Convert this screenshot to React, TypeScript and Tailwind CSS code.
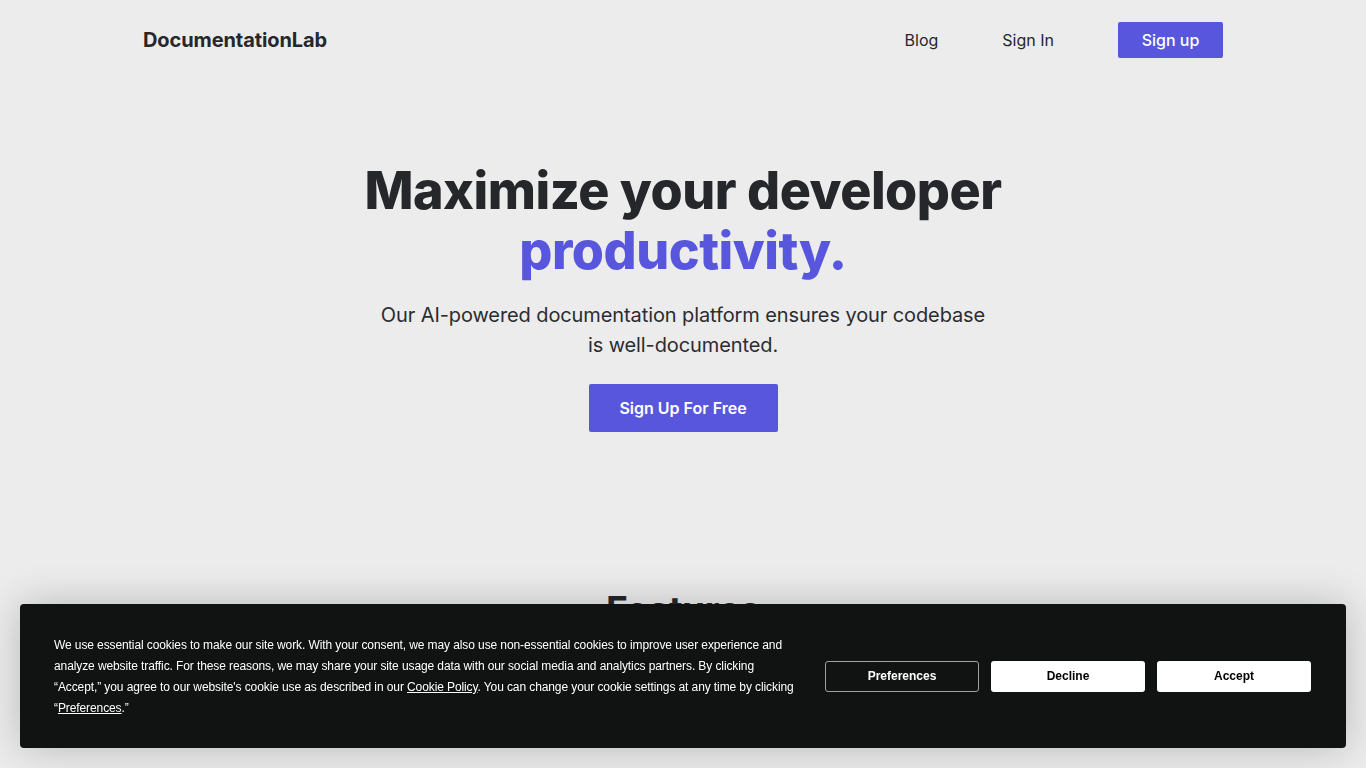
import React from 'react'

const Header = () => {
  return (
    <header className="mx-auto flex h-20 w-[1080px] items-center justify-between">
      <a href="#" className="text-[20px] font-bold tracking-[-0.1px] text-[#26272b]">
        DocumentationLab
      </a>
      <nav className="flex items-center">
        <a href="#" className="mr-[64px] text-[16px] text-[#26272b]">
          Blog
        </a>
        <a href="#" className="mr-16 text-[16px] text-[#26272b]">
          Sign In
        </a>
        <a
          href="#"
          className="flex h-9 w-[105px] items-center justify-center rounded-[2px] bg-[#5856dc] text-[16px] font-medium text-white"
        >
          Sign up
        </a>
      </nav>
    </header>
  )
}

const Hero = () => {
  return (
    <section className="flex flex-col items-center pt-[81px] text-center">
      <h1 className="text-[52px] leading-[60px] font-extrabold tracking-[-0.5px] text-[#26272b]">
        Maximize your developer
        <br />
        <span className="text-[#5856dc]">productivity.</span>
      </h1>
      <p className="mt-[19px] w-[620px] text-[20px] leading-[30px] tracking-[-0.1px] text-[#2b2c30]">
        Our AI-powered documentation platform ensures your codebase is well-documented.
      </p>
      <a
        href="#"
        className="mt-6 flex h-12 w-[189px] items-center justify-center rounded-[2px] bg-[#5856dc] text-[16px] font-semibold text-white"
      >
        Sign Up For Free
      </a>
    </section>
  )
}

const Features = () => {
  return (
    <section className="flex flex-col items-center pt-[155px] pb-40">
      <h2 className="text-[37px] leading-[46px] font-bold tracking-[-0.5px] text-[#26272b]">Features</h2>
    </section>
  )
}

const CookieBanner = () => {
  return (
    <div
      className="fixed right-5 bottom-5 left-5 flex h-[144px] items-center justify-between rounded-[4px] bg-[#111212] pr-[35px] pl-[34px] shadow-[0_0_40px_rgba(0,0,0,0.22)]"
      style={{ fontFamily: '"Liberation Sans", Arial, sans-serif' }}
    >
      <p className="mt-[2px] w-[746px] text-[12px] leading-[21px] tracking-[-0.1px] text-white">
        We use essential cookies to make our site work. With your consent, we may also use non-essential cookies to
        improve user experience and analyze website traffic. For these reasons, we may share your site usage data with
        our social media and analytics partners. By clicking “Accept,” you agree to our website's cookie use as
        described in our{' '}
        <a href="#" className="underline">
          Cookie Policy
        </a>
        . You can change your cookie settings at any time by clicking “
        <a href="#" className="underline">
          Preferences
        </a>
        .”
      </p>
      <div className="flex items-center gap-3">
        <button className="h-[31px] w-[154px] rounded-[3px] border border-[#a0a0a0] bg-[#111212] text-[12px] font-bold text-white">
          Preferences
        </button>
        <button className="h-[31px] w-[154px] rounded-[3px] bg-white text-[12px] font-bold text-black">
          Decline
        </button>
        <button className="h-[31px] w-[154px] rounded-[3px] bg-white text-[12px] font-bold text-black">
          Accept
        </button>
      </div>
    </div>
  )
}

export default function App() {
  return (
    <div className="min-h-screen bg-[#ebeceb]" style={{ fontFamily: 'Inter, "Noto Sans", sans-serif' }}>
      <Header />
      <Hero />
      <Features />
      <CookieBanner />
    </div>
  )
}
